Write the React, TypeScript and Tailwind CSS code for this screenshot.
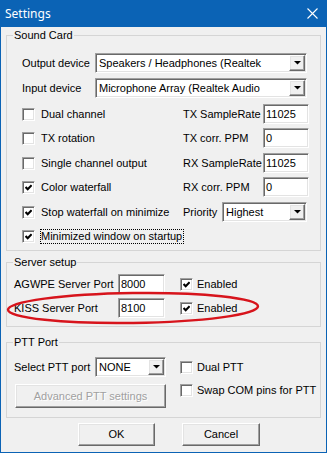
import React from "react";

const sunken =
  "bg-white border border-t-[#a0a0a0] border-l-[#a0a0a0] border-r-white border-b-white shadow-[inset_1px_1px_0_#696969,inset_-1px_-1px_0_#e3e3e3]";
const raised =
  "bg-[#f0f0f0] border border-t-white border-l-white border-r-[#696969] border-b-[#696969] shadow-[inset_-1px_-1px_0_#a0a0a0,inset_1px_1px_0_#e3e3e3]";

function Check({ checked }: { checked?: boolean }) {
  return (
    <div className={`w-[13px] h-[13px] shrink-0 flex items-center justify-center ${sunken}`}>
      {checked && (
        <svg width="7" height="7" viewBox="0 0 7 7">
          <polyline points="0.6,3 2.7,5.2 6.6,1.2" fill="none" stroke="black" strokeWidth="2.1" />
        </svg>
      )}
    </div>
  );
}

function Arrow() {
  return (
    <div className={`w-[16px] h-[16px] shrink-0 flex items-center justify-center ${raised}`}>
      <svg width="7" height="4" viewBox="0 0 7 4">
        <path d="M0 0 H7 L3.5 3.5 Z" fill="black" />
      </svg>
    </div>
  );
}

function Combo({ value, className }: { value: string; className: string }) {
  return (
    <div className={`h-[20px] flex items-center pl-[3px] pr-[1px] ${sunken} ${className}`}>
      <span className="flex-1 whitespace-nowrap overflow-hidden">{value}</span>
      <Arrow />
    </div>
  );
}

function Edit({ value, className }: { value: string; className: string }) {
  return (
    <div className={`h-[20px] flex items-center pl-[2px] ${sunken} ${className}`}>
      <span>{value}</span>
    </div>
  );
}

function CheckRow({
  checked,
  label,
  right,
}: {
  checked?: boolean;
  label: React.ReactNode;
  right?: React.ReactNode;
}) {
  return (
    <div className="flex items-center h-[20px]">
      <div className="w-[161px] flex items-center">
        <Check checked={checked} />
        {label}
      </div>
      {right}
    </div>
  );
}

export default function App() {
  return (
    <div className="relative w-[327px] h-[453px] bg-[#0b63b5] font-['Liberation_Sans',Arial,sans-serif] text-[11px] leading-[13px] text-black overflow-hidden">
      {/* Title bar */}
      <div className="h-[27px] flex items-center justify-between pl-[5px] pr-[9px]">
        <span className="text-white text-[12px] font-['Noto_Sans',sans-serif]">Settings</span>
        <svg width="11" height="11" viewBox="0 0 11 11">
          <path d="M0.5 0.5 L10.5 10.5 M10.5 0.5 L0.5 10.5" stroke="white" strokeWidth="1.1" />
        </svg>
      </div>
      {/* Body */}
      <div className="mx-[1px] h-[425px] bg-[#f0f0f0] flex flex-col">
        <fieldset className="ml-[5px] mt-[2px] w-[315px] h-[222px] border border-[#d5d5d5]">
          <legend className="ml-[6px] px-[1px]">Sound Card</legend>
          <div className="pl-[15px] flex flex-col">
            <div className="flex items-center h-[20px] mt-[11px]">
              <span className="w-[73px]">Output device</span>
              <Combo value="Speakers / Headphones (Realtek" className="w-[212px]" />
            </div>
            <div className="flex items-center h-[20px] mt-[5px]">
              <span className="w-[73px]">Input device</span>
              <Combo value="Microphone Array (Realtek Audio" className="w-[212px]" />
            </div>
            <div className="mt-[6px]">
              <CheckRow
                label={<span className="ml-[6px]">Dual channel</span>}
                right={
                  <>
                    <span className="w-[80px]">TX SampleRate</span>
                    <Edit value="11025" className="w-[46px]" />
                  </>
                }
              />
            </div>
            <div className="mt-[4px]">
              <CheckRow
                label={<span className="ml-[6px]">TX rotation</span>}
                right={
                  <>
                    <span className="w-[80px]">TX corr. PPM</span>
                    <Edit value="0" className="w-[46px]" />
                  </>
                }
              />
            </div>
            <div className="mt-[5px]">
              <CheckRow
                label={<span className="ml-[6px]">Single channel output</span>}
                right={
                  <>
                    <span className="w-[80px]">RX SampleRate</span>
                    <Edit value="11025" className="w-[46px]" />
                  </>
                }
              />
            </div>
            <div className="mt-[4px]">
              <CheckRow
                checked
                label={<span className="ml-[6px]">Color waterfall</span>}
                right={
                  <>
                    <span className="w-[80px]">RX corr. PPM</span>
                    <Edit value="0" className="w-[46px]" />
                  </>
                }
              />
            </div>
            <div className="mt-[5px]">
              <CheckRow
                checked
                label={<span className="ml-[6px]">Stop waterfall on minimize</span>}
                right={
                  <>
                    <span className="w-[39px]">Priority</span>
                    <Combo value="Highest" className="w-[85px]" />
                  </>
                }
              />
            </div>
            <div className="mt-[4px]">
              <CheckRow
                checked
                label={
                  <span className="ml-[5px] border border-dotted border-black pr-[1px] whitespace-nowrap">
                    Minimized window on startup
                  </span>
                }
              />
            </div>
          </div>
        </fieldset>

        <fieldset className="ml-[5px] mt-[5px] w-[315px] h-[71px] border border-[#d5d5d5]">
          <legend className="ml-[6px] px-[1px]">Server setup</legend>
          <div className="pl-[7px] flex flex-col">
            <div className="flex items-center h-[20px] mt-[5px]">
              <span className="w-[104px]">AGWPE Server Port</span>
              <Edit value="8000" className="w-[47px]" />
              <div className="ml-[15px]">
                <Check checked />
              </div>
              <span className="ml-[4px]">Enabled</span>
            </div>
            <div className="flex items-center h-[20px] mt-[4px]">
              <span className="w-[104px]">KISS Server Port</span>
              <Edit value="8100" className="w-[47px]" />
              <div className="ml-[15px]">
                <Check checked />
              </div>
              <span className="ml-[4px]">Enabled</span>
            </div>
          </div>
        </fieldset>

        <fieldset className="ml-[5px] mt-[9px] w-[315px] h-[82px] border border-[#d5d5d5]">
          <legend className="ml-[6px] px-[1px]">PTT Port</legend>
          <div className="flex">
            <div className="pl-[7px] mt-[8px] flex flex-col">
              <div className="flex items-center h-[20px]">
                <span className="w-[81px]">Select PTT port</span>
                <Combo value="NONE" className="w-[71px]" />
              </div>
              <div
                className={`ml-[1px] mt-[7px] w-[151px] h-[24px] flex items-center justify-center text-[#a0a0a0] [text-shadow:1px_1px_0_white] ${raised}`}
              >
                Advanced PTT settings
              </div>
            </div>
            <div className="ml-[14px] mt-[8px] flex flex-col">
              <div className="flex items-center h-[20px]">
                <Check />
                <span className="ml-[4px]">Dual PTT</span>
              </div>
              <div className="flex items-center h-[20px] mt-[3px]">
                <Check />
                <span className="ml-[4px]">Swap COM pins for PTT</span>
              </div>
            </div>
          </div>
        </fieldset>

        <div className="flex mt-[5px]">
          <div className={`ml-[77px] w-[77px] h-[23px] flex items-center justify-center ${raised}`}>OK</div>
          <div className={`ml-[27px] w-[78px] h-[23px] flex items-center justify-center ${raised}`}>Cancel</div>
        </div>
      </div>

      {/* Red annotation ellipse */}
      <svg className="absolute left-[4px] top-[289px] pointer-events-none" width="260" height="38" viewBox="0 0 260 38">
        <ellipse cx="129" cy="19" rx="125" ry="15" fill="none" stroke="#d7141c" strokeWidth="2.5" transform="rotate(-0.8 129 19)" />
      </svg>
    </div>
  );
}
